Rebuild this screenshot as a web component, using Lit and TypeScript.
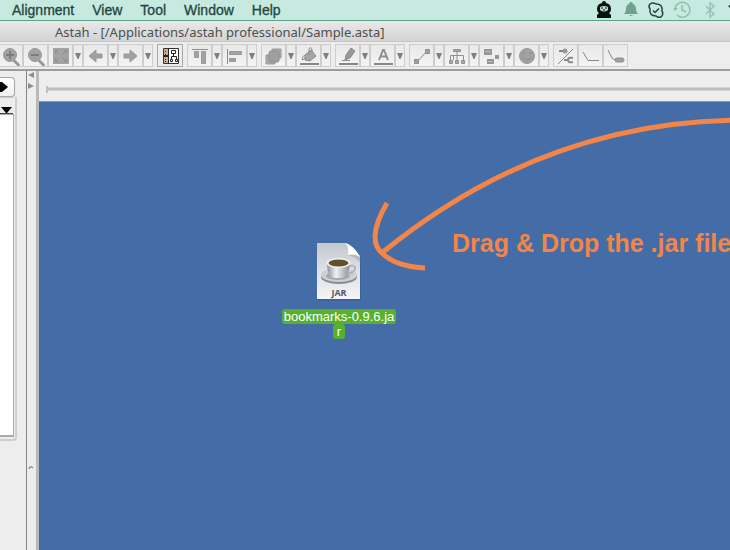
import { LitElement, html, css, svg, TemplateResult } from "lit";
import { customElement } from "lit/decorators.js";

interface Tool {
  label: string;
  icon: TemplateResult;
  menu?: boolean;
  active?: boolean;
}

const lens = svg`<path d="M15.500 15l4 4" stroke="#999" stroke-width="3" stroke-linecap="round"/><circle cx="11" cy="9" r="6.500" fill="#a2a2a2" stroke="#999"/>`;

const groups: Tool[][] = [
  [
    { label: "Zoom in", icon: svg`${lens}<path d="M7 9h8M11 5v8" stroke="#7d7d7d" stroke-width="2"/>` },
    { label: "Zoom out", icon: svg`${lens}<path d="M7 9h8" stroke="#7d7d7d" stroke-width="2"/>` },
    {
      label: "Fit in window",
      menu: true,
      icon: svg`<path d="M4 2h16v16H4z" fill="#a3a3a3"/><path d="M6.500 7.500v-3h3M14.500 4.500h3v3M6.500 12.500v3h3M14.500 15.500h3v-3M7 5l3 3M17 5l-3 3M7 15l3-3M17 15l-3-3" stroke="#8e8e8e" fill="none"/>`,
    },
    { label: "Back", menu: true, icon: svg`<path d="M5 10l7-6v4h6v4h-6v4z" fill="#a0a0a0" stroke="#999" stroke-linejoin="round"/>` },
    { label: "Forward", menu: true, icon: svg`<path d="M18 10l-7-6v4H5v4h6v4z" fill="#a0a0a0" stroke="#999" stroke-linejoin="round"/>` },
  ],
  [
    {
      label: "Structure view",
      active: true,
      icon: svg`<path d="M4.500 2.500h15v15h-15z" fill="#fff" stroke="#333"/><path d="M5 3h4v14H5z" fill="#c9b193"/><path d="M5 10h4" stroke="#222" stroke-width="2"/><path d="M6 5.500h1M6 8.500h1M6 13.500h1M6 15.500h1M9.500 2v16" stroke="#222"/><path d="M12.500 4.500h4v3h-4zM11.500 13.500h2v2h-2zM16.500 13.500h2v2h-2zM14.500 8v3M12.500 13v-2.500h5V13" fill="none" stroke="#222"/>`,
    },
  ],
  [
    { label: "Align top", menu: true, icon: svg`<path d="M4 3.500h16" stroke="#8c8c8c"/><path d="M6.500 5.500h4v6h-4zM13.500 5.500h4v12h-4z" fill="#a2a2a2" stroke="#999"/>` },
    { label: "Align left", menu: true, icon: svg`<path d="M4.500 3v15" stroke="#8c8c8c"/><path d="M6.500 5.500h12v3h-12zM6.500 12.500h6v3h-6z" fill="#a2a2a2" stroke="#999"/>` },
  ],
  [
    { label: "Bring to front", menu: true, icon: svg`<path d="M4 9h9v9H4zM10 3h9v9h-9z" fill="#a9a9a9" stroke="#9a9a9a"/><rect x="7" y="5" width="10" height="11" rx="2" fill="#a0a0a0" stroke="#8f8f8f"/>` },
    { label: "Fill color", menu: true, icon: svg`<path d="M8 9l6-5 5 6-6 5-5-1z" fill="#a6a6a6" stroke="#8c8c8c"/><path d="M12 9V3q1-3 3 0v4M8 9q-3 1-3 5l4-2" fill="none" stroke="#8c8c8c"/><path d="M3 17h19v2H3z" fill="#868686"/>` },
  ],
  [
    { label: "Line color", menu: true, icon: svg`<path d="M10 9l5-7 4 3-5 7-5 2z" fill="#999" stroke="#898989"/><path d="M6 14.500h8" stroke="#8c8c8c"/><path d="M3 17h19v2H3z" fill="#868686"/>` },
    { label: "Font color", menu: true, icon: svg`<path d="M8 14l4-10h1l4 10M9.500 10.500h6" stroke="#909090" stroke-width="2" fill="none"/><path d="M3 17h19v2H3z" fill="#868686"/>` },
  ],
  [
    { label: "Line", menu: true, icon: svg`<path d="M7 16L17 5" stroke="#8a8a8a"/><path d="M4.500 13.500h4v4h-4zM15.500 3.500h4v4h-4z" fill="#a2a2a2" stroke="#8f8f8f"/>` },
    { label: "Tree layout", menu: true, icon: svg`<path d="M12 5v9M5.500 14v-4.500h13V14M8.500 14V9.500" stroke="#909090" fill="none"/><path d="M8.500 3.500h7v2h-7zM4.500 14.500h3v3h-3zM10.500 14.500h3v3h-3zM16.500 14.500h3v3h-3z" fill="#aaa" stroke="#909090"/>` },
    { label: "Auto layout", menu: true, icon: svg`<path d="M4 3h8v6H4zM7 13h7v5H7zM15 9h4v4h-4z" fill="#969696"/><path d="M5 5.500h6M8 15.500h5" stroke="#bbb"/>` },
    { label: "Icons", menu: true, icon: svg`<circle cx="12" cy="10" r="7.500" fill="#a2a2a2" stroke="#979797"/><path d="M7 8q2-2 3 0M14 8q1-2 3 0M7 11q5 6 10 0" fill="none" stroke="#8c8c8c"/>` },
  ],
  [
    { label: "Hide style", icon: svg`<path d="M4 18L19 3" stroke="#858585"/><circle cx="11" cy="5" r="2.500" fill="#999"/><path d="M5 5h4" stroke="#858585" stroke-width="2"/><path d="M19 12q-5-1-5 2t5 2M10 14h4" stroke="#8a8a8a" stroke-width="2" fill="none"/>` },
    { label: "Note line", icon: svg`<path d="M4 6l5 8.500h11" fill="none" stroke="#858585"/>` },
    { label: "Note anchor", icon: svg`<path d="M4 4l4 8 3 2" fill="none" stroke="#858585"/><rect x="11" y="12" width="9" height="4" rx="2" fill="#a2a2a2" stroke="#8a8a8a"/>` },
  ],
];

@customElement("tool-bar")
export class ToolBar extends LitElement {
  static styles = css`
    :host {
      display: flex;
      gap: 4px;
      height: 24px;
      margin-left: -2px;
    }
    .group {
      display: flex;
      flex: none;
    }
    button {
      box-sizing: border-box;
      flex: none;
      height: 23px;
      padding: 0;
      border: 1px solid #cdcdcd;
      background: linear-gradient(#e9e9e9, #f3f3f3);
      display: flex;
      align-items: center;
      justify-content: center;
    }
    .main {
      width: 25px;
    }
    .active {
      width: 26px;
      border: 1px solid #a9a9a9;
      background: #ececec;
    }
    .drop {
      width: 10px;
    }
    svg {
      display: block;
      flex: none;
    }
  `;

  render() {
    return groups.map(
      (group) => html`<div class="group">
        ${group.map(
          (t) => html`<button class="main ${t.active ? "active" : ""}" aria-label=${t.label}>
              <svg width="23" height="20" viewBox="0 0 23 20" fill="none">${t.icon}</svg>
            </button>
            ${t.menu
              ? html`<button class="drop" aria-label="${t.label} options">
                  <svg width="6" height="6" viewBox="0 0 6 6"><path d="M0 0h6L3.500 6h-1z" fill="#7f7f7f" /></svg>
                </button>`
              : ""}`
        )}
      </div>`
    );
  }
}

@customElement("app-root")
export class AppRoot extends LitElement {
  static styles = css`
    :host {
      display: flex;
      flex-direction: column;
      min-height: 100vh;
      overflow: hidden;
      background: #ededed;
      font-family: "Liberation Sans", Arial, sans-serif;
    }
    .menubar {
      box-sizing: border-box;
      height: 21px;
      display: flex;
      align-items: center;
      justify-content: space-between;
      padding-left: 12px;
      background: #c6eadf;
      border-bottom: 1px solid #5ca287;
    }
    nav {
      display: flex;
      gap: 18px;
    }
    nav a {
      color: #23463c;
      font-size: 14px;
      line-height: 20px;
      text-decoration: none;
      -webkit-text-stroke: 0.3px #23463c;
    }
    .status {
      display: flex;
      gap: 6px;
    }
    svg {
      display: block;
    }
    .title {
      box-sizing: border-box;
      height: 21px;
      margin: 0;
      padding: 1px 0 0 55px;
      background: linear-gradient(#e9e9e9, #d3d3d3);
      border-bottom: 1px solid #c4c4c4;
      color: #4f4f4f;
      font-family: "Noto Sans", "Liberation Sans", sans-serif;
      font-size: 13px;
      font-weight: 400;
      line-height: 20px;
      white-space: nowrap;
    }
    .tools {
      padding: 2px 0 1px;
      border-bottom: 2px solid #9d9d9d;
    }
    .body {
      flex: 1;
      display: grid;
      grid-template-columns: 26px 13px minmax(0, 1fr);
    }
    .side {
      padding-top: 6px;
    }
    .play {
      box-sizing: border-box;
      width: 15px;
      height: 20px;
      padding: 0;
      display: block;
      border: 1px solid #a9a9a9;
      border-left: 0;
      border-radius: 0 4px 4px 0;
      background: linear-gradient(#fff, #f1f1f1);
      box-shadow: 0 1px 1px #c8c8c8;
    }
    .frame {
      box-sizing: border-box;
      width: 17px;
      padding: 7px 2px 2px 0;
      border: solid #cfcfcf;
      border-width: 0 2px 2px 0;
      border-radius: 0 0 4px 0;
    }
    .list {
      box-sizing: border-box;
      width: 14px;
      height: 323px;
      border: solid #aaa;
      border-width: 1px 1px 2px 0;
      background: #fff;
    }
    .sort {
      box-sizing: border-box;
      display: block;
      width: 13px;
      height: 10px;
      padding: 2px 0 0 1px;
      border: 0;
      border-bottom: 1px solid #444;
      background: #ededed;
    }
    .splitter {
      box-sizing: border-box;
      display: flex;
      flex-direction: column;
      justify-content: space-between;
      border-left: 1px solid #858585;
      border-right: 3px solid #b9b9b9;
      padding: 1px 0 80px 1px;
    }
    .canvas {
      display: flex;
      flex-direction: column;
      min-width: 0;
    }
    .ruler {
      box-sizing: border-box;
      height: 30px;
      display: flex;
      align-items: center;
      padding: 6px 0 0 7px;
    }
    .tick {
      width: 2px;
      height: 7px;
      background: #bfbfbf;
    }
    .track {
      flex: 1;
      height: 2px;
      border: solid #d6d6d6;
      border-width: 1px 0;
      background: #bcbcbc;
    }
    .desktop {
      flex: 1;
      position: relative;
      overflow: hidden;
      background: #446da8;
      border-top: 1px solid #7c9ab9;
    }
    .arrow {
      position: absolute;
      left: 0;
      top: 0;
    }
    .hint {
      position: absolute;
      left: 413px;
      top: 126px;
      margin: 0;
      color: #f28547;
      font-size: 25px;
      font-weight: 700;
      line-height: 30px;
      white-space: nowrap;
    }
    .file {
      position: absolute;
      left: 240px;
      top: 140px;
      width: 120px;
      margin: 0;
      display: flex;
      flex-direction: column;
      align-items: center;
      gap: 7px;
    }
    figcaption {
      display: flex;
      flex-direction: column;
      align-items: center;
      color: #fff;
      font-size: 13px;
      line-height: 15px;
    }
    .name {
      padding: 0 2px;
      background: #58b02f;
      border-radius: 3px;
    }
    .rest {
      padding: 0 4px;
    }
  `;

  render() {
    return html`
      <header class="menubar">
        <nav>
          ${["Alignment", "View", "Tool", "Window", "Help"].map((m) => html`<a href="#">${m}</a>`)}
        </nav>
        <div class="status">
          <svg width="20" height="20" viewBox="0 0 20 20">
            <path d="M10 1q2 0 2 2 5 1 5 6 0 3-2 4l2 2v3H3v-3l2-2q-2-1-2-4 0-5 5-6 0-2 2-2z" fill="#06100c" />
            <path d="M6 7q4-2 8 0v3q-4 3-8 0z" fill="#b9dcd1" />
            <path d="M7 8h2M11 8h2M9 10h2" stroke="#06100c" />
          </svg>
          <svg width="20" height="20" viewBox="0 0 20 20">
            <path d="M11 2q2 0 2 2 3 1 3 5 0 3 2 5H4q2-2 2-5 0-4 3-5 0-2 2-2zM9 15h4q-2 2-4 0z" fill="#71a090" />
          </svg>
          <svg width="20" height="20" viewBox="0 0 20 20" fill="none" stroke="#23463c" stroke-width="1.500">
            <path d="M4 4q3-2 6 0 7 0 6 7 2 3-1 6-3 1-5-1-7 0-6-7-2-3 0-5zM7 10.500l2 2 4-4" />
          </svg>
          <svg width="20" height="20" viewBox="0 0 20 20" fill="none" stroke="#92bdaf" stroke-width="1.500">
            <path d="M3 9a7.500 7.500 0 1 1 2 6M10 5v5l4 2" />
            <path d="M1 8h5L3 11z" fill="#92bdaf" stroke="none" />
          </svg>
          <svg width="20" height="20" viewBox="0 0 20 20" fill="none" stroke="#98c2b5" stroke-width="1.500">
            <path d="M8 6l8 8-4 3V3l4 3-8 8" />
          </svg>
          <svg width="6" height="20" viewBox="0 0 6 20"><path d="M4 6l2-1v3z" fill="#23463c" /></svg>
        </div>
      </header>
      <h1 class="title">Astah - [/Applications/astah professional/Sample.asta]</h1>
      <div class="tools"><tool-bar></tool-bar></div>
      <main class="body">
        <aside class="side">
          <button class="play" aria-label="Next">
            <svg width="8" height="10" viewBox="0 0 8 10"><path d="M0 0h2l6 5-6 5H0z" /></svg>
          </button>
          <div class="frame">
            <button class="sort" aria-label="Sort">
              <svg width="11" height="6" viewBox="0 0 11 6"><path d="M0 0h11L6 6H5z" /></svg>
            </button>
            <div class="list"></div>
          </div>
        </aside>
        <div class="splitter">
          <svg width="7" height="18" viewBox="0 0 7 18" fill="#8d8d8d"><path d="M6 0v6L0 3zM0 11v6l6-3z" /></svg>
          <svg width="6" height="5" viewBox="0 0 6 5" fill="none" stroke="#8d8d8d"><path d="M1 4q1-4 4-1" stroke-width="1.500" /></svg>
        </div>
        <section class="canvas">
          <div class="ruler">
            <div class="tick"></div>
            <div class="track"></div>
          </div>
          <div class="desktop">
            <svg class="arrow" width="700" height="180" viewBox="39 102 700 180" fill="none" stroke="#f28547" stroke-width="5">
              <path d="M383 252C490 165 610 121 739 120" />
              <path d="M387 203C371 230 373 246 382 253 391 262 405 267 425 268" />
            </svg>
            <figure class="file">
              <svg width="46" height="60" viewBox="0 0 46 60">
                <defs>
                  <linearGradient id="page" x1="0" y1="0" x2="0" y2="1">
                    <stop offset="0" stop-color="#c3c7ce" />
                    <stop offset="0.500" stop-color="#dfe1e5" />
                    <stop offset="1" stop-color="#f4f4f6" />
                  </linearGradient>
                  <linearGradient id="cup" x1="0" y1="0" x2="1" y2="0">
                    <stop offset="0" stop-color="#8d939b" />
                    <stop offset="0.400" stop-color="#f0f1f3" />
                    <stop offset="1" stop-color="#888d95" />
                  </linearGradient>
                </defs>
                <path d="M1 2h29l15 14v43H1z" fill="#2f5386" opacity="0.400" />
                <path d="M1 1h29q7 3 14 13v43H1z" fill="url(#page)" />
                <path d="M30 1q3 5 2 12 7-1 12 2-6-11-14-14z" fill="#fdfdfe" />
                <path d="M32 13q7-1 12 2v5q-5-5-12-7z" fill="#b3b8c0" />
                <ellipse cx="23" cy="35" rx="18" ry="7" fill="#858b94" />
                <ellipse cx="23" cy="33" rx="18" ry="7" fill="#cdd1d6" />
                <ellipse cx="22" cy="34" rx="12" ry="4" fill="#a4a9b1" />
                <path d="M34 24q6-1 5 3-1 4-7 4" fill="none" stroke="#b0b4bb" stroke-width="2" />
                <path d="M11 21q0 14 7 15h8q8-3 8-15z" fill="url(#cup)" />
                <ellipse cx="22.500" cy="21" rx="12" ry="5" fill="#f2f2f3" />
                <ellipse cx="22.500" cy="21" rx="10" ry="3.500" fill="#60502b" />
                <text x="23" y="54" text-anchor="middle" font-family="Open Sans, sans-serif" font-size="9" font-weight="700" fill="#555a62">JAR</text>
              </svg>
              <figcaption>
                <span class="name">bookmarks-0.9.6.ja</span>
                <span class="name rest">r</span>
              </figcaption>
            </figure>
            <p class="hint">Drag &amp; Drop the .jar file</p>
          </div>
        </section>
      </main>
    `;
  }
}
